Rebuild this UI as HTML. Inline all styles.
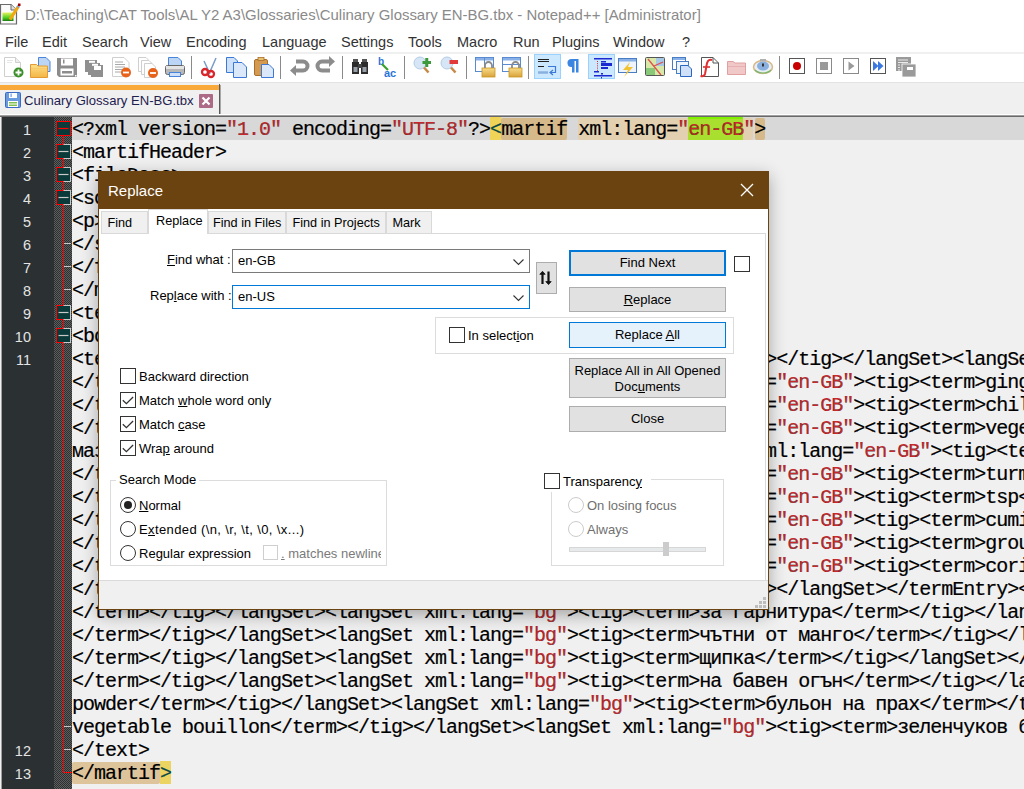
<!DOCTYPE html>
<html><head><meta charset="utf-8">
<style>
*{box-sizing:border-box}
html,body{margin:0;padding:0}
body{width:1024px;height:789px;overflow:hidden;position:relative;background:#f0f0f0;font-family:"Liberation Sans",sans-serif;}
.abs{position:absolute}
#title{left:0;top:0;width:1024px;height:30px;background:#fff}
#title .t{position:absolute;left:25px;top:6px;font-size:14.95px;color:#8a8a8a;white-space:nowrap}
#menu{left:0;top:30px;width:1024px;height:22px;background:#fff}
#menu span{position:absolute;top:4px;font-size:14.5px;color:#333;white-space:nowrap}
#menusep{left:0;top:52px;width:1024px;height:2px;background:#f0f0f0}
#toolbar{left:0;top:54px;width:1024px;height:29px;background:#fff}
#tbsep{left:0;top:82px;width:1024px;height:1px;background:#e3e3e3}
#tabbar{left:0;top:84px;width:1024px;height:30px;background:#f0f0f0}
#edtop1{left:0;top:114px;width:1024px;height:1px;background:#fff}
#edtop2{left:0;top:115px;width:1024px;height:1px;background:#a0a0a0}
#edtop3{left:0;top:116px;width:1024px;height:1px;background:#696969}
#editor{left:0;top:117px;width:1024px;height:672px;background:#f0f0f0;overflow:hidden}
#lnm{left:2px;top:0;width:52px;height:672px;background:#2b3033}
#fold{left:54px;top:0;width:18px;height:672px;background:#2b3033}
#curline{left:72px;top:0;width:952px;height:23px;background:#d8d8d8}
.ln{position:absolute;left:2px;width:29px;text-align:right;font-family:"Liberation Sans",sans-serif;font-size:14.5px;color:#e4e4e4;height:23px;line-height:23px;padding-top:2px}
.row{position:absolute;left:72px;height:23px;line-height:23px;font-family:"Liberation Mono",monospace;font-size:20px;letter-spacing:-1px;color:#000;white-space:pre;padding-top:1px;-webkit-text-stroke:0.2px #000}
.v{color:#c8282c}
.br{color:#0a4a4a;-webkit-text-stroke:0.2px #0a4a4a}

#dshadow{left:98px;top:171px;width:671px;height:439px;box-shadow:0 5px 16px rgba(0,0,0,0.32)}
#dlg{left:98px;top:171px;width:671px;height:439px;background:#f0f0f0;border:1px solid #6b4310;font-family:"Liberation Sans",sans-serif;font-size:13px;color:#000}
#dtitle{left:0;top:0;width:669px;height:37px;background:#6b4310;color:#fff;font-size:15px}
#dbody{left:0;top:37px;width:669px;height:400px;background:#fff}
#panel{left:2px;top:24px;width:665px;height:347px;background:#fff;border-top:1px solid #d9d9d9;border-right:1px solid #d9d9d9}
.tab{top:2px;height:22px;background:#f0f0f0;border:1px solid #d9d9d9;border-bottom:none;padding-left:5.5px;line-height:23px;white-space:nowrap;font-size:12.7px}
.tab.act{top:0;height:25px;background:#fff;border-color:#d9d9d9;padding-left:7px;line-height:23px;z-index:2}

#ctl{position:absolute;left:0;top:0;width:1024px;height:789px;font-family:"Liberation Sans",sans-serif;font-size:13px;color:#000}
#ctl>*{position:absolute}
.lbl{white-space:nowrap;line-height:16px}
.combo{background:#fff;border:1px solid #7a7a7a}
.combo span{position:absolute;left:5px;top:3px;line-height:16px}
.combo .chev{position:absolute;right:5px;top:9px}
.btn{background:#e1e1e1;border:1px solid #adadad;text-align:center;white-space:nowrap}
.cb{width:16px;height:16px;border:1px solid #333;background:#fff}
.cb.dis{border-color:#cfcfcf}
.cb.chk::after{content:"";position:absolute;left:3px;top:2px;width:8px;height:4px;border-left:1.3px solid #222;border-bottom:1.3px solid #222;transform:rotate(-45deg) translate(-1px,3px);}
.rb{width:16px;height:16px;border:1px solid #333;border-radius:50%;background:#fff}
.rb.on::after{content:"";position:absolute;left:3px;top:3px;width:8px;height:8px;border-radius:50%;background:#222}
.rb.dis{border-color:#cccccc}
.grp{border:1px solid #dcdcdc}
</style></head><body>
<div id="title" class="abs"><div class="t">D:\Teaching\CAT Tools\AL Y2 A3\Glossaries\Culinary Glossary EN-BG.tbx - Notepad++ [Administrator]</div></div>
<div id="menu" class="abs">
<span style="left:5px">File</span><span style="left:42px">Edit</span><span style="left:82px">Search</span><span style="left:140px">View</span><span style="left:186px">Encoding</span><span style="left:262px">Language</span><span style="left:341px">Settings</span><span style="left:408px">Tools</span><span style="left:457px">Macro</span><span style="left:513px">Run</span><span style="left:552px">Plugins</span><span style="left:613px">Window</span><span style="left:682px">?</span>
</div>
<div id="menusep" class="abs"></div>
<div id="toolbar" class="abs"></div>
<div id="tbsep" class="abs"></div>
<div id="tabbar" class="abs"></div>

<div class="abs" style="left:0;top:85px;width:219px;height:5px;background:#f9a83a"></div>
<div class="abs" style="left:219px;top:84px;width:1px;height:30px;background:#5a5a5a"></div><div class="abs" style="left:220px;top:85px;width:1px;height:29px;background:#a8a8a8"></div>
<div class="abs" style="left:24px;top:93px;font-size:13.1px;color:#1e2050;white-space:nowrap">Culinary Glossary EN-BG.tbx</div>
<svg id="icons" style="position:absolute;left:0;top:0" width="1024" height="116" viewBox="0 0 1024 116">
<defs>
 <linearGradient id="gGreen" x1="0" y1="0" x2="0" y2="1"><stop offset="0" stop-color="#e8f060"/><stop offset="0.6" stop-color="#50d020"/><stop offset="1" stop-color="#1e7a12"/></linearGradient>
 <linearGradient id="gFold" x1="0" y1="0" x2="0" y2="1"><stop offset="0" stop-color="#fde08a"/><stop offset="1" stop-color="#f3b544"/></linearGradient>
 <linearGradient id="gLock" x1="0" y1="0" x2="0" y2="1"><stop offset="0" stop-color="#f8dc88"/><stop offset="1" stop-color="#d9a23a"/></linearGradient>
</defs>
<!-- title icon -->
<g>
 <path d="M0.5 4.5H11L16.5 10V24H0.5Z" fill="#fafafa" stroke="#6a6a6a" stroke-width="1.2"/>
 <path d="M11 4.5V10H16.5" fill="#ddd" stroke="#6a6a6a" stroke-width="1"/>
 <rect x="2.5" y="12.5" width="11" height="8.5" fill="url(#gGreen)"/>
 <path d="M10 19.5L18.3 6.5" stroke="#f0a810" stroke-width="3.2"/>
 <path d="M17.6 7.5L19.2 5" stroke="#8aa0c0" stroke-width="2.6"/>
 <rect x="18" y="3.5" width="2.5" height="2.5" fill="#a00000"/>
</g>
<!-- 1 new -->
<g>
 <path d="M4.5 57.5H15.5L20.5 62.5V76.5H4.5Z" fill="#fff" stroke="#cfcfcf"/>
 <path d="M15.5 57.5V62.5H20.5" fill="#eee" stroke="#cfcfcf"/>
 <path d="M7 60.5h6M7 62.5h5" stroke="#e6e6e6"/>
 <circle cx="18.5" cy="72.5" r="5" fill="#3d8f2a"/>
 <path d="M18.5 69.5v6M15.5 72.5h6" stroke="#fff" stroke-width="1.8"/>
</g>
<!-- 2 open -->
<g>
 <path d="M38.5 57.5H46L50 61.5V71.5H38.5Z" fill="#bcd5f5" stroke="#4a84d8"/>
 <path d="M30.5 64.5H36.5L38 66H47.5V77.5H30.5Z" fill="url(#gFold)" stroke="#e39a33"/>
 <path d="M31 68.5H47" stroke="#f7ca6a"/>
</g>
<!-- 3 save -->
<g>
 <path d="M57 58H77V77H59L57 75Z" fill="#8c8c8c"/>
 <rect x="61" y="58.5" width="12" height="7" fill="#fff"/>
 <rect x="63" y="59.5" width="1.5" height="4" fill="#8c8c8c"/>
 <rect x="60.5" y="68.5" width="13" height="7" fill="#fff"/>
 <rect x="62" y="71" width="10" height="2.5" fill="#8c8c8c"/>
 <rect x="75" y="75" width="1.5" height="1.5" fill="#fff"/>
</g>
<!-- 4 save all -->
<g fill="#8f8f8f">
 <rect x="85" y="60" width="12" height="12"/>
 <rect x="88" y="63" width="12" height="12"/>
 <rect x="91" y="65" width="12" height="12"/>
 <rect x="89" y="60.8" width="6" height="2" fill="#fff"/>
 <rect x="92" y="63.8" width="6" height="2" fill="#fff"/>
 <rect x="94" y="66" width="7" height="4" fill="#fff"/>
</g>
<!-- 5 close -->
<g>
 <path d="M112.5 57.5H124L129 62.5V76.5H112.5Z" fill="#fff" stroke="#cfcfcf"/>
 <path d="M115 62h8M115 64.5h10M115 67h10M115 69.5h9M115 72h6" stroke="#a8a8a8" stroke-width="1"/>
 <circle cx="126" cy="72.5" r="5" fill="#e8621a"/>
 <path d="M123 72.5h6" stroke="#fff" stroke-width="1.8"/>
</g>
<!-- 6 close all -->
<g>
 <path d="M138.5 57.5H146L148.5 60V71.5H138.5Z" fill="#fff" stroke="#cfcfcf"/>
 <path d="M141.5 60.5H149L152 63.5V74.5H141.5Z" fill="#fff" stroke="#cfcfcf"/>
 <path d="M144.5 63.5H152L155.5 67V77.5H144.5Z" fill="#fff" stroke="#cfcfcf"/>
 <circle cx="153" cy="73" r="5" fill="#e8621a"/>
 <path d="M150 73h6" stroke="#fff" stroke-width="1.8"/>
</g>
<!-- 7 print -->
<g>
 <path d="M168.5 57.5H178L181.5 61V66.5H168.5Z" fill="#bcd5f5" stroke="#4a84d8"/>
 <rect x="165.5" y="65.5" width="19" height="9" rx="2" fill="#b8b8b8" stroke="#666"/>
 <rect x="166" y="66" width="18" height="3" fill="#e4e4e4"/>
 <rect x="169.5" y="72.5" width="11" height="4" fill="#cfe1f8" stroke="#4a84d8"/>
</g>
<path d="M191.5 56V79M280.5 56V79M342.5 56V79M404.5 56V79M466.5 56V79M528.5 56V79M779.5 56V79" stroke="#8a8a8a"/>
<!-- 8 cut -->
<g>
 <path d="M209 74L216 58M210 74L204 61" stroke="#7a9cc8" stroke-width="1.5"/>
 <circle cx="205" cy="72" r="3" fill="none" stroke="#d8262a" stroke-width="2.3"/>
 <circle cx="211" cy="74" r="3" fill="none" stroke="#d8262a" stroke-width="2.3"/>
</g>
<!-- 9 copy -->
<g>
 <path d="M226.5 57.5H234L237.5 61V72.5H226.5Z" fill="#cfe1f8" stroke="#3b78d8"/>
 <path d="M233.5 62.5H242L246.5 67V77.5H233.5Z" fill="#dbe8fa" stroke="#3b78d8"/>
</g>
<!-- 10 paste -->
<g>
 <rect x="254.5" y="59.5" width="13" height="16" rx="1.5" fill="#d39a50" stroke="#a86e2a"/>
 <rect x="258" y="57.5" width="6" height="3" fill="#e7c070" stroke="#a86e2a" stroke-width="0.8"/>
 <path d="M261.5 64.5H269L273.5 69V77.5H261.5Z" fill="#dbe8fa" stroke="#3b78d8"/>
</g>
<!-- 11 undo / 12 redo -->
<path d="M296 61.5H303A4.5 4.5 0 0 1 303 70.5H294" stroke="#8c8c8c" stroke-width="4" fill="none"/>
<path d="M290 70.5L296 65V76Z" fill="#8c8c8c"/>
<path d="M329 61.5H322A4.5 4.5 0 0 0 322 70.5H330" stroke="#8c8c8c" stroke-width="4" fill="none"/>
<path d="M335 61.5L329 56V67Z" fill="#8c8c8c"/>
<!-- 13 find -->
<g>
 <rect x="353" y="59" width="5" height="4" fill="#555"/>
 <rect x="362" y="59" width="5" height="4" fill="#555"/>
 <rect x="352" y="62" width="7" height="12" fill="#2c2c2c"/>
 <rect x="361" y="62" width="7" height="12" fill="#2c2c2c"/>
 <rect x="358" y="64" width="4" height="4" fill="#444"/>
 <rect x="353.5" y="67" width="4" height="5" fill="#9aa0a8"/>
 <rect x="362.5" y="67" width="4" height="5" fill="#9aa0a8"/>
</g>
<!-- 14 replace -->
<g>
 <text x="378" y="65" font-family="Liberation Sans" font-weight="bold" font-size="10" fill="#2a74d8">b</text>
 <path d="M382 64L388 70" stroke="#3aa030" stroke-width="2.2"/>
 <text x="384" y="77" font-family="Liberation Sans" font-weight="bold" font-size="11" fill="#2a74d8">ac</text>
</g>
<!-- 15 zoom in / 16 zoom out -->
<g>
 <circle cx="420" cy="63" r="6" fill="#d6e6f6" stroke="#b4cce6"/>
 <path d="M424 67.5L428.5 72.5" stroke="#c88a48" stroke-width="2.6"/>
 <path d="M422.5 62.5h8.5M426.75 58v9" stroke="#3c9a3a" stroke-width="3"/>
</g>
<g>
 <circle cx="447" cy="63" r="6" fill="#d6e6f6" stroke="#b4cce6"/>
 <path d="M451 67.5L455.5 72.5" stroke="#c88a48" stroke-width="2.6"/>
 <rect x="449.5" y="60" width="8.5" height="4" fill="#e23a3a"/>
</g>
<!-- 17/18 sync -->
<g>
 <rect x="475.5" y="57.5" width="18" height="14" fill="#fff" stroke="#5a8ad0"/>
 <rect x="476" y="58" width="17" height="2.5" fill="#8ab0e8"/>
 <path d="M484.5 58V71.5" stroke="#5a8ad0"/>
 <rect x="482" y="68" width="13" height="9" fill="url(#gLock)" stroke="#c8961e" stroke-width="0.8"/>
 <path d="M485 68V65.5A3.5 3.5 0 0 1 492 65.5V68" stroke="#8a8a8a" stroke-width="1.8" fill="none"/>
</g>
<g>
 <rect x="502.5" y="57.5" width="18" height="14" fill="#fff" stroke="#5a8ad0"/>
 <rect x="503" y="58" width="17" height="2.5" fill="#8ab0e8"/>
 <path d="M503 64.5H520" stroke="#5a8ad0"/>
 <rect x="509" y="68" width="13" height="9" fill="url(#gLock)" stroke="#c8961e" stroke-width="0.8"/>
 <path d="M512 68V65.5A3.5 3.5 0 0 1 519 65.5V68" stroke="#8a8a8a" stroke-width="1.8" fill="none"/>
</g>
<!-- 19 word wrap pressed -->
<rect x="534.5" y="54.5" width="26" height="24" fill="#cce8ff" stroke="#99d1ff"/>
<path d="M538 59.5h11M538 61.5h11M538 66.5h6" stroke="#222" stroke-width="1.2"/>
<path d="M548 66.5h7.5v6h-5" stroke="#3b78d8" stroke-width="1.2" fill="none"/>
<path d="M538 72.5h10" stroke="#8ab0e0" stroke-width="2.5"/>
<path d="M553 70L550 72.5L553 75" stroke="#3b78d8" stroke-width="1.2" fill="none"/>
<!-- 20 pilcrow -->
<path d="M571 59h7.5v13.5h-2.5V61h-1.5V72.5h-2.5V67A4 4 0 0 1 571 59Z" fill="#3b86e0"/>
<!-- 21 indent guide pressed -->
<rect x="588.5" y="54.5" width="26" height="24" fill="#cce8ff" stroke="#99d1ff"/>
<g fill="#1a2ad0">
 <rect x="594" y="58" width="18" height="1.5"/><rect x="601" y="61" width="5" height="1.5"/>
 <rect x="601" y="63" width="11" height="3"/><rect x="601" y="67" width="7" height="2"/>
 <rect x="594" y="71" width="5" height="1.5"/><rect x="601" y="73" width="2" height="1.5"/>
 <rect x="594" y="75" width="18" height="1.5"/><rect x="601" y="77" width="1" height="1.5"/>
</g>
<path d="M597.5 61v10" stroke="#e02020" stroke-width="1" stroke-dasharray="1 1.2"/>
<!-- 22 UDL -->
<g>
 <rect x="618.5" y="58.5" width="18" height="14" fill="#eef4fb" stroke="#4a7cc4"/>
 <rect x="619" y="59" width="17" height="2.5" fill="#8ab0e8"/>
 <path d="M630 62L623 70H628L624 77L633 67H628Z" fill="#f2c230"/>
</g>
<!-- 23 doc map -->
<g>
 <rect x="645.5" y="57.5" width="19" height="18" rx="1" fill="#d8e8a8" stroke="#555"/>
 <rect x="656" y="58" width="8" height="8" fill="#a8c8e8"/>
 <rect x="646" y="68" width="9" height="7" fill="#88c878"/>
 <path d="M648 59L661 75M654 66L663 62" stroke="#e05050" stroke-width="1.3"/>
</g>
<!-- 24 doc list -->
<g>
 <rect x="672.5" y="57.5" width="13" height="12" fill="#fff" stroke="#4a7cc4"/>
 <rect x="673" y="58" width="12" height="2" fill="#8ab0e8"/>
 <rect x="676.5" y="61.5" width="12" height="12" fill="#eef4fb" stroke="#4a7cc4"/>
 <path d="M680.5 65.5H688L691.5 69V76.5H680.5Z" fill="#cfe0f8" stroke="#2a64c4"/>
</g>
<!-- 25 function list -->
<g>
 <path d="M701.5 57.5H713L718.5 63V76.5H701.5Z" fill="#fff" stroke="#555"/>
 <path d="M713 57.5V63H718.5" fill="none" stroke="#555"/>
 <path d="M712 60C708 59 707 62 706.5 66L705 74C704.5 76 703 76.5 700.5 76" stroke="#e03030" stroke-width="2" fill="none"/>
 <path d="M703 67h7" stroke="#e03030" stroke-width="1.6"/>
</g>
<!-- 26 folder workspace faded -->
<g>
 <path d="M727.5 61.5H733L735 63H745.5V74.5H727.5Z" fill="#f0c8c8" stroke="#e0a0a0"/>
 <path d="M728 66.5H745" stroke="#e8b0b0"/>
</g>
<!-- 27 monitoring eye -->
<g>
 <ellipse cx="763" cy="67" rx="9.5" ry="6.5" fill="#e8eef2" stroke="#d8b888" stroke-width="1.5"/>
 <ellipse cx="763" cy="66" rx="6" ry="4.5" fill="#8ab0e0"/>
 <rect x="760" y="59" width="6" height="2.5" fill="#b0b0b0"/>
 <rect x="762" y="63.5" width="2" height="3" fill="#333"/>
 <path d="M755 70C759 74 767 74 771 70" stroke="#7ab870" stroke-width="1.2" fill="none"/>
</g>
<!-- 28-31 macro -->
<rect x="789.5" y="58.5" width="15" height="15" fill="#fff" stroke="#555"/>
<circle cx="797" cy="66" r="4" fill="#c80000"/>
<rect x="816.5" y="58.5" width="15" height="15" fill="#fff" stroke="#8a8a8a"/>
<rect x="820" y="62" width="8" height="8" fill="#9a9a9a"/>
<rect x="843.5" y="58.5" width="15" height="15" fill="#fff" stroke="#8a8a8a"/>
<path d="M848.5 61.5L854.5 66L848.5 70.5Z" fill="#9a9a9a"/>
<rect x="870.5" y="58.5" width="15" height="15" fill="#fff" stroke="#555"/>
<path d="M873 61L878.5 66L873 71ZM878 61L883.5 66L878 71Z" fill="#3a7ae0"/>
<!-- 32 save macro -->
<g>
 <rect x="896" y="57" width="15" height="14" fill="#9a9a9a"/>
 <rect x="902" y="64" width="14" height="13" fill="#9a9a9a" stroke="#fff" stroke-width="0.8"/>
 <path d="M898 60h10M898 62.5h10M898 65h2M898 67.5h2M898 70h2" stroke="#fff" stroke-width="0.8"/>
 <rect x="907" y="67" width="6" height="3" fill="#fff"/>
</g>
<!-- tab icon -->
<g>
 <rect x="5.5" y="92.5" width="15" height="15" rx="1" fill="#6a9ae0" stroke="#3a6ac4"/>
 <rect x="9" y="93" width="8" height="5" fill="#fff"/>
 <rect x="10.5" y="93.5" width="1.2" height="3.5" fill="#6a9ae0"/>
 <rect x="8" y="101" width="10" height="6" fill="#fff"/>
 <rect x="9" y="102" width="8" height="1.5" fill="#80c050"/>
 <rect x="9" y="104.5" width="8" height="1.5" fill="#80c050"/>
</g>
<!-- tab close -->
<rect x="199" y="94" width="14" height="14" rx="1" fill="#ad6a86"/>
<path d="M202.5 97.5L209.5 104.5M209.5 97.5L202.5 104.5" stroke="#fff" stroke-width="2.2"/>
</svg>

<div id="edtop1" class="abs"></div><div id="edtop2" class="abs"></div><div id="edtop3" class="abs"></div>
<div id="editor" class="abs">
<div class="abs" style="left:1px;top:0;width:1px;height:672px;background:#a0a0a0"></div><div id="lnm" class="abs"></div>
<svg id="fold" class="abs" width="18" height="672"><defs><pattern id="chk" width="2" height="2" patternUnits="userSpaceOnUse"><rect x="0" y="0" width="1" height="1" fill="#5e5f5c"/><rect x="1" y="1" width="1" height="1" fill="#5e5f5c"/></pattern></defs><rect width="18" height="672" fill="url(#chk)"/></svg>
<div id="curline" class="abs"></div>
<div class="abs" style="left:490px;top:0;width:11px;height:23px;background:#f0d458"></div>
<div class="abs" style="left:501px;top:1px;width:66px;height:22px;background:#d5b98b;border-radius:2px"></div>
<div class="abs" style="left:578px;top:1px;width:110px;height:22px;background:#e3d0b0;border-radius:2px 0 0 2px"></div>
<div class="abs" style="left:688px;top:0;width:55px;height:23px;background:#a9e030;border-top:2px solid #80f000"></div>
<div class="abs" style="left:743px;top:1px;width:10px;height:22px;background:#e3d0b0;border-radius:0 2px 2px 0"></div>
<div class="abs" style="left:755px;top:1px;width:10px;height:22px;background:#d5b98b;border-radius:2px"></div>
<div class="abs" style="left:72px;top:645px;width:88px;height:22px;background:#dec49b;border-radius:2px"></div>
<div class="abs" style="left:160px;top:644px;width:11px;height:23px;background:#ecd462"></div>

<svg class="abs" style="left:54px;top:0" width="18" height="672" viewBox="0 0 18 672">
 <path d="M9.5 19V655.5H18" stroke="#ff0000" stroke-width="1" fill="none"/>
 <g stroke="#c8c8c8" stroke-width="1.2">
  <path d="M10 126.5H17M10 149.5H17M10 172.5H17M10 609.5H17M10 632.5H17"/>
 </g>
 <rect x="2.5" y="4.5" width="14" height="14" fill="#0b3a3a" stroke="#ff0000"/><path d="M4.5 11.5H14.5" stroke="#ff0000" stroke-width="1.2"/><rect x="2.5" y="27.5" width="14" height="14" fill="#0b3a3a" stroke="#c8c8c8"/><path d="M2.5 27V42M2 41.5H9.5M2 27.5H9.5" stroke="#ff0000" stroke-width="1"/><path d="M4.5 34.5H14.5" stroke="#c8c8c8" stroke-width="1.2"/><rect x="2.5" y="50.5" width="14" height="14" fill="#0b3a3a" stroke="#c8c8c8"/><path d="M2.5 50V65M2 64.5H9.5M2 50.5H9.5" stroke="#ff0000" stroke-width="1"/><path d="M4.5 57.5H14.5" stroke="#c8c8c8" stroke-width="1.2"/><rect x="2.5" y="73.5" width="14" height="14" fill="#0b3a3a" stroke="#c8c8c8"/><path d="M2.5 73V88M2 87.5H9.5M2 73.5H9.5" stroke="#ff0000" stroke-width="1"/><path d="M4.5 80.5H14.5" stroke="#c8c8c8" stroke-width="1.2"/><rect x="2.5" y="188.5" width="14" height="14" fill="#0b3a3a" stroke="#c8c8c8"/><path d="M2.5 188V203M2 202.5H9.5M2 188.5H9.5" stroke="#ff0000" stroke-width="1"/><path d="M4.5 195.5H14.5" stroke="#c8c8c8" stroke-width="1.2"/><rect x="2.5" y="211.5" width="14" height="14" fill="#0b3a3a" stroke="#c8c8c8"/><path d="M2.5 211V226M2 225.5H9.5M2 211.5H9.5" stroke="#ff0000" stroke-width="1"/><path d="M4.5 218.5H14.5" stroke="#c8c8c8" stroke-width="1.2"/>
</svg>

<div class="ln" style="top:0px">1</div><div class="ln" style="top:23px">2</div><div class="ln" style="top:46px">3</div><div class="ln" style="top:69px">4</div><div class="ln" style="top:92px">5</div><div class="ln" style="top:115px">6</div><div class="ln" style="top:138px">7</div><div class="ln" style="top:161px">8</div><div class="ln" style="top:184px">9</div><div class="ln" style="top:207px">10</div><div class="ln" style="top:230px">11</div><div class="ln" style="top:621px">12</div><div class="ln" style="top:644px">13</div>
<div id="lines"><div class="row" style="top:0px">&lt;?xml version=<span class="v">"1.0"</span> encoding=<span class="v">"UTF-8"</span>?&gt;<span class="br">&lt;</span>martif xml:lang=<span class="v">"en-GB"</span>&gt;</div>
<div class="row" style="top:23px">&lt;martifHeader&gt;</div>
<div class="row" style="top:46px">&lt;fileDesc&gt;</div>
<div class="row" style="top:69px">&lt;sourceDesc&gt;</div>
<div class="row" style="top:92px">&lt;p&gt;Culinary Glossary&lt;/p&gt;</div>
<div class="row" style="top:115px">&lt;/sourceDesc&gt;</div>
<div class="row" style="top:138px">&lt;/fileDesc&gt;</div>
<div class="row" style="top:161px">&lt;/martifHeader&gt;</div>
<div class="row" style="top:184px">&lt;text&gt;</div>
<div class="row" style="top:207px">&lt;body&gt;</div>
<div class="row" style="top:230px">&lt;termEntry&gt;&lt;langSet xml:lang=<span class="v">"en-GB"</span>&gt;&lt;tig&gt;&lt;term&gt;cardamoms&lt;/term&gt;&lt;/tig&gt;&lt;/langSet&gt;&lt;langSet xml:lang=<span class="v">"bg"</span>&gt;&lt;tig&gt;&lt;term&gt;кардамон</div>
<div class="row" style="top:253px">&lt;/term&gt;&lt;/tig&gt;&lt;/langSet&gt;&lt;/termEntry&gt;&lt;termEntry&gt;&lt;langSet xml:lang=<span class="v">"en-GB"</span>&gt;&lt;tig&gt;&lt;term&gt;ginger&lt;/term&gt;&lt;/tig&gt;</div>
<div class="row" style="top:276px">&lt;/term&gt;&lt;/tig&gt;&lt;/langSet&gt;&lt;/termEntry&gt;&lt;termEntry&gt;&lt;langSet xml:lang=<span class="v">"en-GB"</span>&gt;&lt;tig&gt;&lt;term&gt;chilli&lt;/term&gt;&lt;/tig&gt;</div>
<div class="row" style="top:299px">&lt;/term&gt;&lt;/tig&gt;&lt;/langSet&gt;&lt;/termEntry&gt;&lt;termEntry&gt;&lt;langSet xml:lang=<span class="v">"en-GB"</span>&gt;&lt;tig&gt;&lt;term&gt;vegetable oil&lt;/term&gt;&lt;/tig&gt;</div>
<div class="row" style="top:322px">мазнина&lt;/term&gt;&lt;/tig&gt;&lt;/langSet&gt;&lt;/termEntry&gt;&lt;termEntry&gt;&lt;langSet xml:lang=<span class="v">"en-GB"</span>&gt;&lt;tig&gt;&lt;term&gt;mustard seeds&lt;/term&gt;</div>
<div class="row" style="top:345px">&lt;/term&gt;&lt;/tig&gt;&lt;/langSet&gt;&lt;/termEntry&gt;&lt;termEntry&gt;&lt;langSet xml:lang=<span class="v">"en-GB"</span>&gt;&lt;tig&gt;&lt;term&gt;turmeric&lt;/term&gt;&lt;/tig&gt;</div>
<div class="row" style="top:368px">&lt;/term&gt;&lt;/tig&gt;&lt;/langSet&gt;&lt;/termEntry&gt;&lt;termEntry&gt;&lt;langSet xml:lang=<span class="v">"en-GB"</span>&gt;&lt;tig&gt;&lt;term&gt;tsp&lt;/term&gt;&lt;/term&gt;&lt;/tig&gt;</div>
<div class="row" style="top:391px">&lt;/term&gt;&lt;/tig&gt;&lt;/langSet&gt;&lt;/termEntry&gt;&lt;termEntry&gt;&lt;langSet xml:lang=<span class="v">"en-GB"</span>&gt;&lt;tig&gt;&lt;term&gt;cumin seeds&lt;/term&gt;&lt;/tig&gt;</div>
<div class="row" style="top:414px">&lt;/term&gt;&lt;/tig&gt;&lt;/langSet&gt;&lt;/termEntry&gt;&lt;termEntry&gt;&lt;langSet xml:lang=<span class="v">"en-GB"</span>&gt;&lt;tig&gt;&lt;term&gt;ground black&lt;/term&gt;&lt;/tig&gt;</div>
<div class="row" style="top:437px">&lt;/term&gt;&lt;/tig&gt;&lt;/langSet&gt;&lt;/termEntry&gt;&lt;termEntry&gt;&lt;langSet xml:lang=<span class="v">"en-GB"</span>&gt;&lt;tig&gt;&lt;term&gt;coriander&lt;/term&gt;&lt;/tig&gt;</div>
<div class="row" style="top:460px">&lt;/term&gt;&lt;/tig&gt;&lt;/langSet&gt;&lt;langSet xml:lang=<span class="v">"bg"</span>&gt;&lt;tig&gt;&lt;term&gt;кимион&gt;&lt;/langSet&gt;&lt;/termEntry&gt;&lt;termEntry&gt;&lt;langSet</div>
<div class="row" style="top:483px">&lt;/term&gt;&lt;/tig&gt;&lt;/langSet&gt;&lt;langSet xml:lang=<span class="v">"bg"</span>&gt;&lt;tig&gt;&lt;term&gt;за гарнитура&lt;/term&gt;&lt;/tig&gt;&lt;/langSet&gt;&lt;/termEntry&gt;</div>
<div class="row" style="top:506px">&lt;/term&gt;&lt;/tig&gt;&lt;/langSet&gt;&lt;langSet xml:lang=<span class="v">"bg"</span>&gt;&lt;tig&gt;&lt;term&gt;чътни от манго&lt;/term&gt;&lt;/tig&gt;&lt;/langSet&gt;&lt;/termEntry&gt;</div>
<div class="row" style="top:529px">&lt;/term&gt;&lt;/tig&gt;&lt;/langSet&gt;&lt;langSet xml:lang=<span class="v">"bg"</span>&gt;&lt;tig&gt;&lt;term&gt;щипка&lt;/term&gt;&lt;/tig&gt;&lt;/langSet&gt;&lt;/termEntry&gt;</div>
<div class="row" style="top:552px">&lt;/term&gt;&lt;/tig&gt;&lt;/langSet&gt;&lt;langSet xml:lang=<span class="v">"bg"</span>&gt;&lt;tig&gt;&lt;term&gt;на бавен огън&lt;/term&gt;&lt;/tig&gt;&lt;/langSet&gt;&lt;/termEntry&gt;</div>
<div class="row" style="top:575px">powder&lt;/term&gt;&lt;/tig&gt;&lt;/langSet&gt;&lt;langSet xml:lang=<span class="v">"bg"</span>&gt;&lt;tig&gt;&lt;term&gt;бульон на прах&lt;/term&gt;&lt;/tig&gt;&lt;/langSet&gt;</div>
<div class="row" style="top:598px">vegetable bouillon&lt;/term&gt;&lt;/tig&gt;&lt;/langSet&gt;&lt;langSet xml:lang=<span class="v">"bg"</span>&gt;&lt;tig&gt;&lt;term&gt;зеленчуков бульон&lt;/term&gt;</div>
<div class="row" style="top:621px">&lt;/text&gt;</div>
<div class="row" style="top:644px">&lt;/martif<span class="br">&gt;</span></div></div>
</div>

<div id="dshadow" class="abs"></div>
<div id="dlg" class="abs">
 <div id="dtitle" class="abs"><span class="abs" style="left:9px;top:10px">Replace</span>
  <svg class="abs" style="left:641px;top:11px" width="14" height="14" viewBox="0 0 14 14"><path d="M1 1L13 13M13 1L1 13" stroke="#fff" stroke-width="1.3" fill="none"/></svg>
 </div>
 <div id="dbody" class="abs">
  <div id="panel" class="abs"></div>
  <div class="tab abs" style="left:2px;width:47px">Find</div>
  <div class="tab act abs" style="left:49px;width:60px">Replace</div>
  <div class="tab abs" style="left:109px;width:78px;padding-left:4px">Find in Files</div>
  <div class="tab abs" style="left:187px;width:100px">Find in Projects</div>
  <div class="tab abs" style="left:287px;width:46px">Mark</div>
 </div>
</div>

<div id="ctl">
 <div class="lbl" style="left:167px;top:252px"><u>F</u>ind what :</div>
 <div class="combo" style="left:232px;top:249px;width:298px;height:24px;border-color:#7a7a7a"><span>en-GB</span>
  <svg class="chev" width="11" height="7" viewBox="0 0 11 7"><path d="M0.5 0.5L5.5 5.5L10.5 0.5" stroke="#333" stroke-width="1.1" fill="none"/></svg></div>
 <div class="lbl" style="left:150px;top:288px">Rep<u>l</u>ace with :</div>
 <div class="combo" style="left:232px;top:285px;width:298px;height:24px;border-color:#0078d7"><span>en-US</span>
  <svg class="chev" width="11" height="7" viewBox="0 0 11 7"><path d="M0.5 0.5L5.5 5.5L10.5 0.5" stroke="#333" stroke-width="1.1" fill="none"/></svg></div>
 <div class="btn" style="left:536px;top:262px;width:21px;height:32px;background:#e1e1e1;border-color:#adadad"></div>
 <svg style="position:absolute;left:536px;top:262px" width="21" height="32" viewBox="0 0 21 32"><path d="M6.5 11.5V22M12.5 9.5V20" stroke="#111" stroke-width="2.2" fill="none"/><path d="M3.8 12.3L6.5 9.3L9.2 12.3Z M9.8 19.6L12.5 22.6L15.2 19.6Z" fill="#111" stroke="#111" stroke-width="0.8"/></svg>
 <div class="btn" style="left:569px;top:250px;width:157px;height:26px;border:2px solid #0078d7;line-height:22px">Find Next</div>
 <div class="cb" style="left:734px;top:256px"></div>
 <div class="btn" style="left:569px;top:287px;width:157px;height:25px;line-height:23px"><u>R</u>eplace</div>
 <div class="grp" style="left:435px;top:317px;width:299px;height:37px"></div>
 <div class="cb" style="left:449px;top:327px"></div>
 <div class="lbl" style="left:468px;top:328px">In select<u>i</u>on</div>
 <div class="btn" style="left:569px;top:322px;width:157px;height:26px;background:#e5f1fb;border-color:#0078d7;line-height:24px">Replace <u>A</u>ll</div>
 <div class="btn" style="left:569px;top:358px;width:157px;height:40px;line-height:16px;padding-top:4px">Replace All in All Opened<br>Doc<u>u</u>ments</div>
 <div class="btn" style="left:569px;top:406px;width:157px;height:26px;line-height:24px">Close</div>

 <div class="cb" style="left:120px;top:368px"></div><div class="lbl" style="left:139px;top:369px">Backward direction</div>
 <div class="cb" style="left:120px;top:392px"><svg style="position:absolute;left:-1px;top:-1px" width="16" height="16" viewBox="0 0 16 16"><path d="M2.8 8.3L6.4 11.7L13.1 5" stroke="#333" stroke-width="1.3" fill="none"/></svg></div><div class="lbl" style="left:139px;top:393px">Match <u>w</u>hole word only</div>
 <div class="cb" style="left:120px;top:416px"><svg style="position:absolute;left:-1px;top:-1px" width="16" height="16" viewBox="0 0 16 16"><path d="M2.8 8.3L6.4 11.7L13.1 5" stroke="#333" stroke-width="1.3" fill="none"/></svg></div><div class="lbl" style="left:139px;top:417px">Match <u>c</u>ase</div>
 <div class="cb" style="left:120px;top:440px"><svg style="position:absolute;left:-1px;top:-1px" width="16" height="16" viewBox="0 0 16 16"><path d="M2.8 8.3L6.4 11.7L13.1 5" stroke="#333" stroke-width="1.3" fill="none"/></svg></div><div class="lbl" style="left:139px;top:441px">Wra<u>p</u> around</div>

 <div class="grp" style="left:110px;top:480px;width:277px;height:86px"></div>
 <div class="lbl" style="left:116px;top:472px;background:#fff;padding:0 3px">Search Mode</div>
 <div class="rb on" style="left:120px;top:497px"></div><div class="lbl" style="left:139px;top:498px"><u>N</u>ormal</div>
 <div class="rb" style="left:120px;top:521px"></div><div class="lbl" style="left:139px;top:522px;letter-spacing:0.38px">E<u>x</u>tended (\n, \r, \t, \0, \x...)</div>
 <div class="rb" style="left:120px;top:545px"></div><div class="lbl" style="left:139px;top:546px">Re<u>g</u>ular expression</div>
 <div class="cb dis" style="left:263px;top:545px;width:15px;height:15px"></div>
 <div class="lbl" style="left:281px;top:546px;color:#7a7a7a;width:100px;overflow:hidden"><u>.</u> matches newline</div>

 <div class="grp" style="left:551px;top:479px;width:173px;height:87px"></div>
 <div class="lbl" style="left:541px;top:472px;background:#fff;width:110px;height:20px"></div>
 <div class="cb" style="left:544px;top:473px"></div><div class="lbl" style="left:563px;top:474px">Transparenc<u>y</u></div>
 <div class="rb dis" style="left:568px;top:497px"></div><div class="lbl" style="left:587px;top:498px;color:#707070">On losing focus</div>
 <div class="rb dis" style="left:568px;top:521px"></div><div class="lbl" style="left:587px;top:522px;color:#707070">Always</div>
 <div style="position:absolute;left:569px;top:547px;width:137px;height:5px;background:#e7eaea;border:1px solid #d6d6d6"></div>
 <div style="position:absolute;left:663px;top:542px;width:6px;height:14px;background:#cccccc"></div>

 <div style="position:absolute;left:99px;top:580px;width:669px;height:1px;background:#dadada"></div>
 <div style="position:absolute;left:99px;top:581px;width:669px;height:28px;background:#f0f0f0"></div>
 <svg style="position:absolute;left:755px;top:597px" width="12" height="12" viewBox="0 0 12 12" fill="#bdbdbd"><rect x="8" y="0" width="3" height="3"/><rect x="4" y="4" width="3" height="3"/><rect x="8" y="4" width="3" height="3"/><rect x="0" y="8" width="3" height="3"/><rect x="4" y="8" width="3" height="3"/><rect x="8" y="8" width="3" height="3"/></svg>
</div>
</body></html>
